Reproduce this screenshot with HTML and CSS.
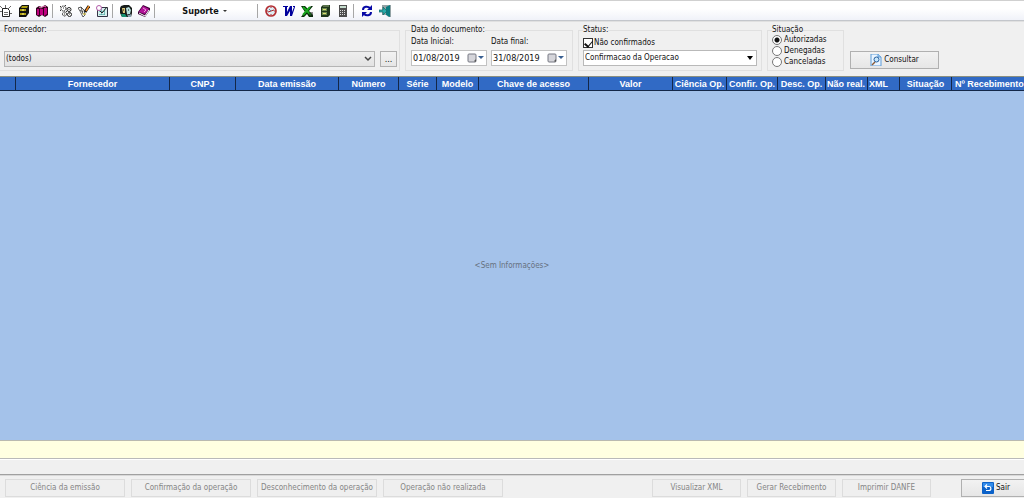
FILE: index.html
```html
<!DOCTYPE html>
<html lang="pt-BR">
<head>
<meta charset="utf-8">
<title>Manifestação do destinatário</title>
<link rel="stylesheet" href="styles.css">
</head>
<body>
<div class="window">
  <nav class="toolbar" aria-label="Ferramentas">
    <button class="tool" type="button" aria-label="Novo documento"><svg viewBox="0 0 12 12"><path d="M2.500 3.500h5l2 2v6h-7z" fill="#fff" stroke="#222"/><path d="M0 1l3 3M11 1 8 4M5.500 0v3M0 6.500h2M10 8.500h2M4 7.500h4M4 9.500h4" stroke="#444" stroke-width=".8"/></svg></button>
    <button class="tool" type="button" aria-label="Arquivo"><svg viewBox="0 0 12 12"><path d="M1 3 4 0h7v8l-3 4H1z" fill="#111"/><path d="M2 4h6v2H2zM2 8h6v2H2zM4 1h6L9 3H3z" fill="#a89b10"/><path d="M4 5h2M4 9h2" stroke="#fff58a"/></svg></button>
    <button class="tool" type="button" aria-label="Produtos"><svg viewBox="0 0 12 12"><path d="M0 3l3-2 3 1 3-2 3 2v8l-3 2-3-2-3 2-3-2z" fill="#34001f"/><path d="M1 4h2v6H1zM4 4h3v6H4zM8 3h3v6l-3 2z" fill="#c00080"/><path d="M3 2l2 1 3-2 2 1" fill="none" stroke="#ef72bd"/></svg></button>
    <span class="separator"></span>
    <button class="tool" type="button" aria-label="Configurar"><svg viewBox="0 0 12 12"><g fill="#fff" stroke="#222"><circle cx="3.500" cy="3.500" r="2.500" stroke-dasharray="1.500 .5"/><circle cx="9" cy="4.500" r="2"/><circle cx="4.500" cy="9" r="2" stroke-dasharray="1.500 .5"/><circle cx="9.500" cy="9.500" r="2"/></g><path d="M3 3h1M9 4v1M4 9h1M9 9h1M0 1l1 1M6 0 5 1M0 6l1-1M6 6l1 1" stroke="#333"/></svg></button>
    <button class="tool" type="button" aria-label="Editar"><svg viewBox="0 0 12 12"><path d="M0 3l3-1 3 3 1 5-2 2-3-6zM2 5l3 2M3 2l2 7" fill="#fff" stroke="#333" stroke-width=".8"/><path d="M11 1 7 7" stroke="#111" stroke-width="3"/><path d="M11 1 8 6" stroke="#ef8a20" stroke-width="1.500"/><path d="M5 9h3" stroke="#d5bd20"/></svg></button>
    <button class="tool" type="button" aria-label="Agenda"><svg viewBox="0 0 12 12"><path d="M1.500 2.500h10v9h-10z" fill="#d7f1ef" stroke="#334"/><path d="M3 6.500h6M3 9.500h6M5.500 4v6M8.500 4v6" stroke="#57a9a6" stroke-width=".7"/><circle cx="3" cy="3" r="2.500" fill="#fff" stroke="#b05aa8"/><path d="M11 2 6 8 4 6" fill="none" stroke="#222"/></svg></button>
    <span class="separator"></span>
    <button class="tool" type="button" aria-label="Usuários"><svg viewBox="0 0 12 12"><path d="M1 1l3-1h5l3 3v5l-1 4H2L0 8V3z" fill="#161b18"/><path d="M2 3h3v5H3z" fill="#d8c77b"/><path d="M6 3l3-1 2 3-1 4H7z" fill="#b9e2df"/><path d="M1 9h4l2 3H2z" fill="#169070"/><path d="M7 9l2 1 2-1v3H8z" fill="#879eae"/><path d="M8 5h1M3 5h1" stroke="#111"/></svg></button>
    <button class="tool" type="button" aria-label="Ajuda"><svg viewBox="0 0 12 12"><path d="M0 7 5 0l7 3v2l-5 7-7-3z" fill="#3e0037"/><path d="M1 7l4-6 6 3-4 5z" fill="#b31499"/><path d="M1 8l6 3 4-6" fill="none" stroke="#fff"/><path d="M5 3l3 2-2 2" fill="none" stroke="#ef9de1"/></svg></button>
    <span class="separator"></span>
    <button class="support" type="button">Suporte <span class="caret"></span></button>
    <span class="separator"></span>
    <button class="tool" type="button" aria-label="Relógio"><svg viewBox="0 0 12 12"><circle cx="6" cy="6" r="5" fill="#dcecf3" stroke="#b32d32" stroke-width="1.700"/><path d="M3 7l3-1 3-1M6 2v1M6 9v1M2 6h1M9 6h1" fill="none" stroke="#a9282d"/><path d="M4 4l2 2" stroke="#5c819b"/></svg></button>
    <button class="tool" type="button" aria-label="Word"><svg viewBox="0 0 12 12"><path d="M0 1h5v1H4v5l3-6h2v6l2-5h-1V1h2v1L9 11H7V6l-3 5H2V2H0z" fill="#00009c"/></svg></button>
    <button class="tool" type="button" aria-label="Excel"><svg viewBox="0 0 12 12"><path d="M0 1h4l3 3 3-3h2L8 6l4 4v2H8L6 9l-3 3H0l4-5z" fill="#062c08"/><path d="M2 2l8 8M9 2 2 10" stroke="#18a51d" stroke-width="2"/><path d="M8 8h4M8 10h4" stroke="#222"/></svg></button>
    <button class="tool" type="button" aria-label="Cadastro"><svg viewBox="0 0 12 12"><path d="M2 2l2-2h7v10l-2 2H2z" fill="#1f361c"/><path d="M3 3h5v3H3zM3 7h5v3H3z" fill="#68894c"/><path d="M4 4.500h3M4 8.500h3" stroke="#e1dc71"/><path d="M4 1h6" stroke="#95ac78"/></svg></button>
    <button class="tool" type="button" aria-label="Calculadora"><svg viewBox="0 0 12 12"><path d="M2 0h8v12H2z" fill="#4e4e4e"/><path d="M3 1h6v2H3z" fill="#c5dccd"/><path d="M3 5.500h6M3 7.500h6M3 9.500h6" stroke="#ddd" stroke-dasharray="1 1"/></svg></button>
    <span class="separator"></span>
    <button class="tool" type="button" aria-label="Atualizar"><svg viewBox="0 0 12 12"><path d="M2 5c0-4 5-4 7-2M10 7c0 4-5 4-7 2" fill="none" stroke="#0709a5" stroke-width="2"/><path d="M11 0v5H6zM1 12V7h5z" fill="#0709a5"/></svg></button>
    <button class="tool" type="button" aria-label="Fechar sistema"><svg viewBox="0 0 12 12"><path d="M3 0h9v12H9l-1-2H3z" fill="#93a3a5"/><path d="M7 2l4-2v12l-4-2z" fill="#087c80"/><path d="M0 5h4V2l4 4-4 4V7H0z" fill="#27aaa9" stroke="#176466" stroke-width=".7"/></svg></button>
  </nav>

  <form class="filters">
    <fieldset class="group supplier">
      <legend><label for="supplier">Fornecedor:</label></legend>
      <div class="supplier-row">
        <div class="select-wrap">
          <select id="supplier" class="supplier-select"><option>(todos)</option></select>
          <svg class="chevron" viewBox="0 0 8 6"><path d="M1 1l3 3 3-3" fill="none" stroke="#444" stroke-width="1.500"/></svg>
        </div>
        <button class="button browse" type="button" aria-label="Procurar fornecedor">...</button>
      </div>
    </fieldset>

    <fieldset class="group dates">
      <legend>Data do documento:</legend>
      <div class="date-row">
        <div class="date-field">
          <label for="start">Data Inicial:</label>
          <div class="date-box"><input id="start" type="text" value="01/08/2019"><button class="calendar" type="button" aria-label="Escolher data inicial"><svg viewBox="0 0 18 10"><rect x="1" y="1" width="8" height="8" rx="1" fill="#d5d5da" stroke="#777983"/><path d="M8 9V7h1" stroke="#666"/><path d="M11 3h6l-3 3z" fill="#385f91"/></svg></button></div>
        </div>
        <div class="date-field">
          <label for="end">Data final:</label>
          <div class="date-box"><input id="end" type="text" value="31/08/2019"><button class="calendar" type="button" aria-label="Escolher data final"><svg viewBox="0 0 18 10"><rect x="1" y="1" width="8" height="8" rx="1" fill="#d5d5da" stroke="#777983"/><path d="M8 9V7h1" stroke="#666"/><path d="M11 3h6l-3 3z" fill="#385f91"/></svg></button></div>
        </div>
      </div>
    </fieldset>

    <fieldset class="group status">
      <legend>Status:</legend>
      <label class="check"><input type="checkbox" checked>Não confirmados</label>
      <div class="select-wrap">
        <select class="status-select" aria-label="Status"><option>Confirmacao da Operacao</option></select>
        <svg class="chevron" viewBox="0 0 8 6"><path d="M1 1h6L4 5z" fill="#000"/></svg>
      </div>
    </fieldset>

    <fieldset class="group situation">
      <legend>Situação</legend>
      <div class="radios">
        <label class="radio"><input type="radio" name="situation" checked>Autorizadas</label>
        <label class="radio"><input type="radio" name="situation">Denegadas</label>
        <label class="radio"><input type="radio" name="situation">Canceladas</label>
      </div>
    </fieldset>

    <button class="button consult" type="button"><svg viewBox="0 0 12 12"><path d="M1 0h7l3 3v9H1z" fill="#e9f4ff" stroke="#5d9bd7"/><path d="M8 0v3h3" fill="#a9d2f5" stroke="#5d9bd7"/><circle cx="6.500" cy="5.500" r="2.500" fill="#c8e7fb" stroke="#265f9d"/><path d="M5 8l-3 3" stroke="#8a5b38" stroke-width="1.500"/></svg>Consultar</button>
  </form>

  <main class="grid">
    <table>
      <colgroup><col class="w-mark"><col class="w-supplier"><col class="w-cnpj"><col class="w-issue"><col class="w-number"><col class="w-series"><col class="w-model"><col class="w-key"><col class="w-value"><col class="w-science"><col class="w-confirm"><col class="w-unknown"><col class="w-undone"><col class="w-xml"><col class="w-state"><col></colgroup>
      <thead>
        <tr><th></th><th>Fornecedor</th><th>CNPJ</th><th>Data emissão</th><th>Número</th><th>Série</th><th>Modelo</th><th>Chave de acesso</th><th>Valor</th><th>Ciência Op.</th><th>Confir. Op.</th><th>Desc. Op.</th><th class="start">Não real.</th><th class="start">XML</th><th>Situação</th><th class="start last">Nº Recebimento</th></tr>
      </thead>
      <tbody><tr><td colspan="16">&lt;Sem Informações&gt;</td></tr></tbody>
    </table>
  </main>
  <div class="summary"></div>
  <div class="status-bar"></div>

  <footer class="actions">
    <button class="button wide" type="button" disabled>Ciência da emissão</button>
    <button class="button wide" type="button" disabled>Confirmação da operação</button>
    <button class="button wide" type="button" disabled>Desconhecimento da operação</button>
    <button class="button wide" type="button" disabled>Operação não realizada</button>
    <div class="spacer"></div>
    <button class="button" type="button" disabled>Visualizar XML</button>
    <button class="button" type="button" disabled>Gerar Recebimento</button>
    <button class="button" type="button" disabled>Imprimir DANFE</button>
    <button class="button exit" type="button"><svg viewBox="0 0 12 12"><rect x="0" y="0" width="12" height="12" rx="1" fill="#0c62c9"/><path d="M1 1h10v4H1z" fill="#328bea"/><path d="M4 4.500h3c2.500 0 2.500 4 0 4H4M5 2.500l-2 2 2 2" fill="none" stroke="#fff" stroke-width="1.200"/></svg>Sair</button>
  </footer>
</div>
</body>
</html>
```

FILE: styles.css
```css
* { box-sizing: border-box; }

body {
  margin: 0;
  overflow: hidden;
  background: #fff;
  color: #111;
  font: 8px/12px "DejaVu Sans Condensed", "Noto Sans", sans-serif;
}

button, input, select { margin: 0; font: inherit; color: inherit; }

.window {
  display: flex;
  flex-direction: column;
  height: 100vh;
  padding-bottom: 1px;
  background: #fff;
}

/* Toolbar */
.toolbar {
  display: flex;
  flex: none;
  align-items: center;
  height: 21px;
  margin-left: -3px;
  padding-top: 1px;
  border-top: 1px solid #d0d0d0;
  border-bottom: 1px solid #c3c6cb;
  background: linear-gradient(#fff 40%, #f0f2f9);
}

.tool {
  width: 18px;
  height: 16px;
  padding: 2px 3px;
  border: 0;
  background: none;
}

.tool svg { display: block; width: 12px; height: 12px; }

.separator {
  width: 1px;
  height: 14px;
  margin: 0 4px 0 1px;
  background: #a6a6a6;
}

.support {
  display: flex;
  align-items: center;
  justify-content: center;
  gap: 4px;
  width: 97px;
  padding: 0 6px 0 0;
  border: 0;
  background: none;
  font-size: 9px;
  font-weight: bold;
}

.caret {
  border: 2px solid transparent;
  border-top-color: #333;
  border-bottom: 0;
}

/* Filters */
.filters {
  display: flex;
  flex: none;
  align-items: flex-start;
  gap: 5px;
  height: 55px;
  padding: 2px 85px 0 0;
  border-top: 1px solid #e0e0e0;
  background: #f0f0f0;
}

.group {
  min-width: 0;
  height: 47px;
  margin: 0;
  padding: 0 5px;
  border: 1px solid #e0e0e0;
}

.group legend { padding: 0; line-height: 12px; }

.supplier { flex: 1; padding: 0 2px 0 4px; border-left: 0; }
.supplier-row { display: flex; gap: 5px; padding-top: 15px; }
.supplier-row .select-wrap { flex: 1; }

.select-wrap { position: relative; }

.select-wrap select {
  display: block;
  appearance: none;
  width: 100%;
  height: 16px;
  padding: 0 1px;
  border: 1px solid #b9b9b9;
  border-radius: 0;
  background: #fff;
}

.select-wrap .supplier-select { background: linear-gradient(#eee, #e3e3e3); border-color: #b5b5b5; }

.chevron {
  position: absolute;
  top: 5px;
  right: 3px;
  width: 8px;
  height: 6px;
  pointer-events: none;
}

.dates { width: 168px; }
.date-row { display: flex; gap: 4px; }
.date-field { width: 76px; }
.date-field label { display: block; height: 14px; }

.date-box {
  display: flex;
  align-items: center;
  height: 16px;
  border: 1px solid #c2c2c2;
  background: #fff;
}

.date-box input {
  flex: 1;
  min-width: 0;
  height: 14px;
  padding: 0 1px;
  border: 0;
  background: none;
  font-size: 9px;
}

.calendar { width: 19px; height: 10px; padding: 0; border: 0; background: none; }
.calendar svg { display: block; width: 18px; height: 10px; }

.status { width: 184px; padding: 0 4px; }
.check, .radio { display: flex; align-items: center; }
.check { gap: 1px; height: 14px; }

.check input {
  appearance: none;
  width: 10px;
  height: 10px;
  border: 1px solid #333;
  background: #fff;
}

.check input:checked::before {
  display: block;
  width: 4px;
  height: 6px;
  margin: 0 2px;
  border: solid #111;
  border-width: 0 1px 2px 0;
  content: "";
  transform: rotate(40deg);
}

.situation { width: 77px; padding: 0 4px; }
.radios { margin-top: -2px; }
.radio { gap: 2px; height: 11px; }

.radio input {
  appearance: none;
  width: 10px;
  height: 10px;
  border: 1px solid #777;
  border-radius: 50%;
  background: #fff;
}

.radio input:checked { background: radial-gradient(#111 0 2px, #fff 3px); }

.button {
  display: flex;
  align-items: center;
  justify-content: center;
  gap: 2px;
  flex: none;
  width: 89px;
  height: 18px;
  padding: 0;
  border: 1px solid #b0b0b0;
  background: linear-gradient(#f2f2f2, #e6e6e6);
  white-space: nowrap;
}

.button svg { width: 12px; height: 12px; }
.button:disabled { border-color: #dcdcdc; background: #efefef; color: #858585; }
.browse { width: 17px; height: 16px; font-size: 9px; }
.consult { margin: 27px 0 0 1px; }

/* Data grid */
.grid {
  display: grid;
  flex: 1;
  min-height: 0;
  overflow: hidden;
  border-top: 1px solid #8a8f80;
  background: #a4c2ea;
}

table {
  width: 100%;
  height: 100%;
  border-collapse: separate;
  border-spacing: 0;
  table-layout: fixed;
}

th {
  height: 14px;
  padding: 1px 0 0;
  overflow: hidden;
  border-right: 1px solid #142748;
  border-bottom: 1px solid #142748;
  background: #316ac5;
  color: #fff;
  font: bold 9px/12px "Liberation Sans", Arial, sans-serif;
  white-space: nowrap;
}

th.start { padding-left: 1px; text-align: left; }
th.last { padding-left: 3px; border-right: 0; }
td { padding: 0; color: #66717f; text-align: center; vertical-align: middle; }

.w-mark { width: 16px; }
.w-supplier { width: 154px; }
.w-cnpj { width: 66px; }
.w-issue { width: 103px; }
.w-number { width: 60px; }
.w-series { width: 38px; }
.w-model { width: 42px; }
.w-key { width: 110px; }
.w-value { width: 84px; }
.w-science { width: 54px; }
.w-confirm { width: 51px; }
.w-unknown { width: 48px; }
.w-undone { width: 42px; }
.w-xml { width: 32px; }
.w-state { width: 52px; }

.summary {
  flex: none;
  height: 19px;
  border-top: 1px solid #b9b9b0;
  border-bottom: 1px solid #b9b9b9;
  background: #ffffe1;
}

.status-bar {
  flex: none;
  height: 16px;
  border-top: 1px solid #fff;
  border-bottom: 1px solid #a0a0a0;
  background: #f0f0f0;
}

/* Bottom actions */
.actions {
  display: flex;
  flex: none;
  gap: 6px;
  height: 23px;
  padding: 3px 0 0 5px;
  overflow: hidden;
  border-top: 1px solid #d8d8d8;
  background: #f0f0f0;
}

.actions .wide { width: 120px; }
.spacer { flex: 1; }
.actions .exit { width: 70px; margin: 0 -7px 0 24px; }
```
